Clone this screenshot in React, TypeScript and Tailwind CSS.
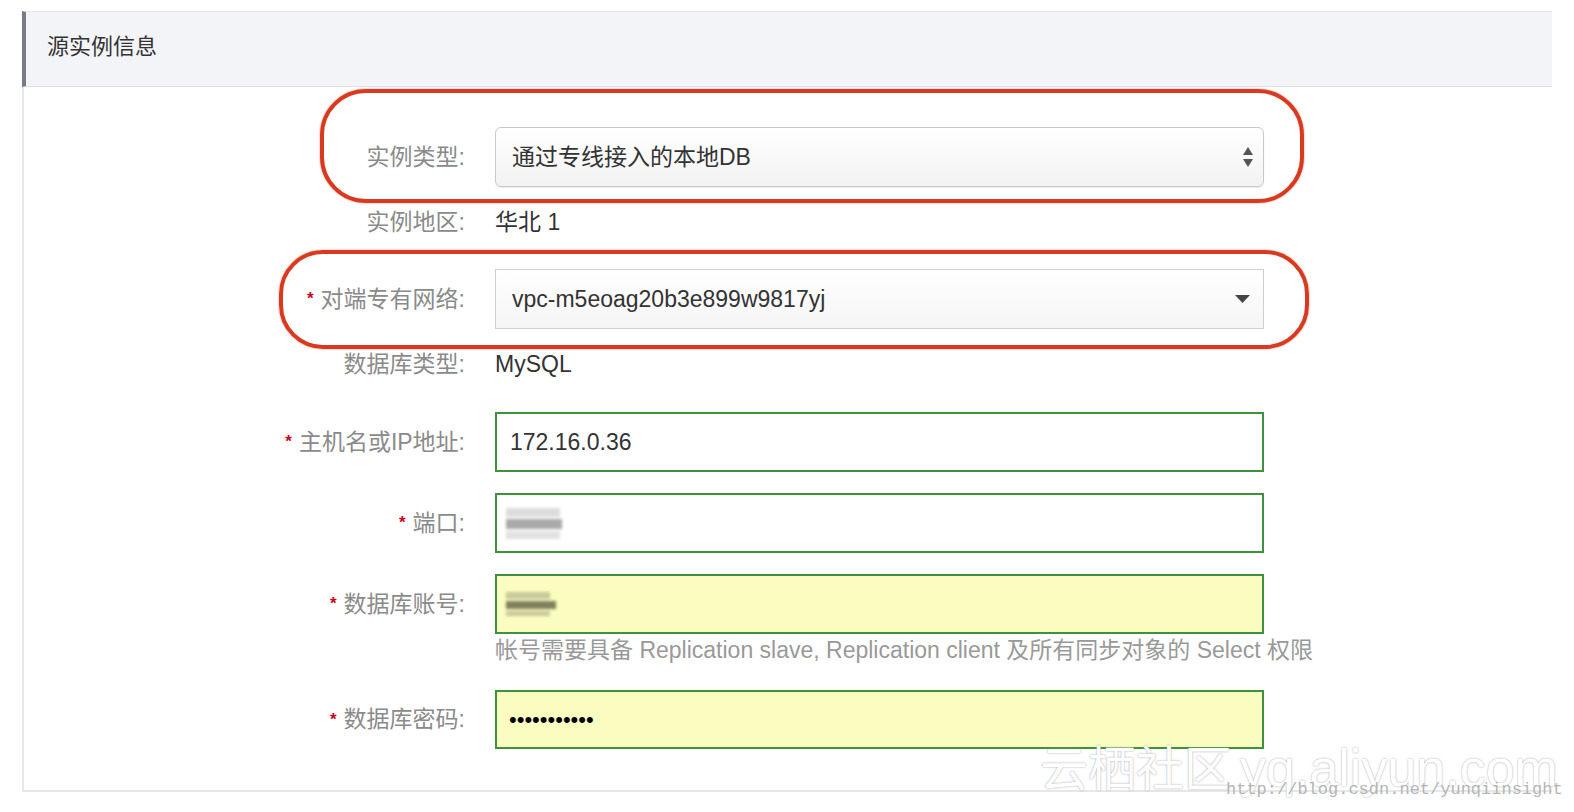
const font = "font-['Helvetica_Neue','Liberation_Sans','Noto_Sans_CJK_SC',sans-serif]";

function Label({ text, required }: { text: string; required?: boolean }) {
  return (
    <div className="flex w-[441px] shrink-0 items-center justify-end text-[23px] text-[#8a8a8a]">
      {required && <span className="mr-[7px] text-[17px] font-bold text-[#d0021b]">*</span>}
      <span>{text}:</span>
    </div>
  );
}

function UpDown() {
  return (
    <svg width="12" height="22" viewBox="0 0 12 22">
      <path d="M6 1 L11 9 L1 9 Z" fill="#555" />
      <path d="M1 13 L11 13 L6 21 Z" fill="#555" />
    </svg>
  );
}

function Caret() {
  return (
    <svg width="15" height="8" viewBox="0 0 15 8">
      <path d="M0 0 L15 0 L7.5 8 Z" fill="#444" />
    </svg>
  );
}

function Blur({ dark }: { dark?: boolean }) {
  return (
    <div className="flex flex-col gap-[2px] blur-[1.5px]">
      <div className={dark ? "h-[7px] w-[44px] bg-[#c8c99a]" : "h-[9px] w-[54px] bg-[#dcdcdc]"} />
      <div className={dark ? "h-[8px] w-[50px] bg-[#7f805c]" : "h-[10px] w-[56px] bg-[#a9a9a9]"} />
      <div className={dark ? "h-[5px] w-[44px] bg-[#c8c99a]" : "h-[8px] w-[54px] bg-[#e2e2e2]"} />
    </div>
  );
}

export default function App() {
  return (
    <div className={`relative h-[812px] w-[1574px] overflow-hidden bg-white pt-[11px] ${font}`}>
      <div className="ml-[22px] w-[1530px]">
        <div className="flex h-[76px] items-center border-t border-b border-l-4 border-t-[#e4e5ea] border-b-[#e0e1e7] border-l-[#7b7b88] bg-[#f3f4f8] pb-[6px] pl-[21px] text-[22px] text-[#333]">
          源实例信息
        </div>

        <div className="relative flex flex-col border-b-2 border-l-2 border-[#e6e7ec] pb-[41px] pt-[40px]">
          <div className="flex h-[60px] items-center">
            <Label text="实例类型" />
            <div className="ml-[30px] flex h-[60px] w-[769px] items-center justify-between rounded-[6px] border border-[#c9c9c9] bg-linear-to-b from-white to-[#f2f2f2] pl-[16px] pr-[9px] text-[23px] text-[#333] shadow-[0_1px_1px_rgba(0,0,0,0.08)]">
              <span>通过专线接入的本地DB</span>
              <UpDown />
            </div>
          </div>

          <div className="mt-[20px] flex h-[30px] items-center">
            <Label text="实例地区" />
            <div className="ml-[30px] text-[23px] text-[#333]">华北 1</div>
          </div>

          <div className="mt-[32px] flex h-[60px] items-center">
            <Label text="对端专有网络" required />
            <div className="ml-[30px] flex h-[60px] w-[769px] items-center justify-between border border-[#cfcfcf] bg-linear-to-b from-white to-[#f5f5f5] pl-[16px] pr-[13px] text-[23px] text-[#333]">
              <span>vpc-m5eoag20b3e899w9817yj</span>
              <Caret />
            </div>
          </div>

          <div className="mt-[20px] flex h-[30px] items-center">
            <Label text="数据库类型" />
            <div className="ml-[30px] text-[23px] text-[#333]">MySQL</div>
          </div>

          <div className="mt-[33px] flex h-[60px] items-center">
            <Label text="主机名或IP地址" required />
            <div className="ml-[30px] flex h-[60px] w-[769px] items-center border-2 border-[#3e923e] bg-white pl-[13px] text-[23px] text-[#333]">
              172.16.0.36
            </div>
          </div>

          <div className="mt-[21px] flex h-[60px] items-center">
            <Label text="端口" required />
            <div className="ml-[30px] flex h-[60px] w-[769px] items-center border-2 border-[#3e923e] bg-white pl-[9px]">
              <Blur />
            </div>
          </div>

          <div className="mt-[21px] flex h-[60px] items-center">
            <Label text="数据库账号" required />
            <div className="ml-[30px] flex h-[60px] w-[769px] items-center border-2 border-[#3e923e] bg-[#fafdbf] pl-[9px]">
              <Blur dark />
            </div>
          </div>

          <div className="ml-[471px] mt-[2px] h-[28px] whitespace-nowrap text-[23px] leading-[28px] text-[#999]">
            帐号需要具备 Replication slave, Replication client 及所有同步对象的 Select 权限
          </div>

          <div className="mt-[26px] flex h-[59px] items-center">
            <Label text="数据库密码" required />
            <div className="ml-[30px] flex h-[59px] w-[769px] items-center border-2 border-[#3e923e] bg-[#fafdbf] pl-[12px] text-[22px] text-black">
              •••••••••••
            </div>
          </div>

          <div className="pointer-events-none absolute left-[296px] top-[2px] h-[114px] w-[984px] rounded-[46px] border-[4px] border-[#d93a1f] shadow-[0_0_2px_rgba(217,58,31,0.6)]" />
          <div className="pointer-events-none absolute left-[255px] top-[163px] h-[99px] w-[1030px] rounded-[44px] border-[4px] border-[#d93a1f] shadow-[0_0_2px_rgba(217,58,31,0.6)]" />
        </div>
      </div>

      <div className="pointer-events-none absolute left-[1040px] top-[742px] flex items-baseline whitespace-nowrap leading-none text-white [text-shadow:0_0_2px_#9a9a9a]">
        <span className="text-[48px]">云栖社区</span>
        <span className="ml-[8px] text-[52px]">yq.aliyun.com</span>
      </div>
      <div className="pointer-events-none absolute left-[1226px] top-[777px] whitespace-nowrap font-['Liberation_Mono',monospace] text-[17px] text-[#b5b5b5]">
        http://blog.csdn.net/yunqiinsight
      </div>
    </div>
  );
}
